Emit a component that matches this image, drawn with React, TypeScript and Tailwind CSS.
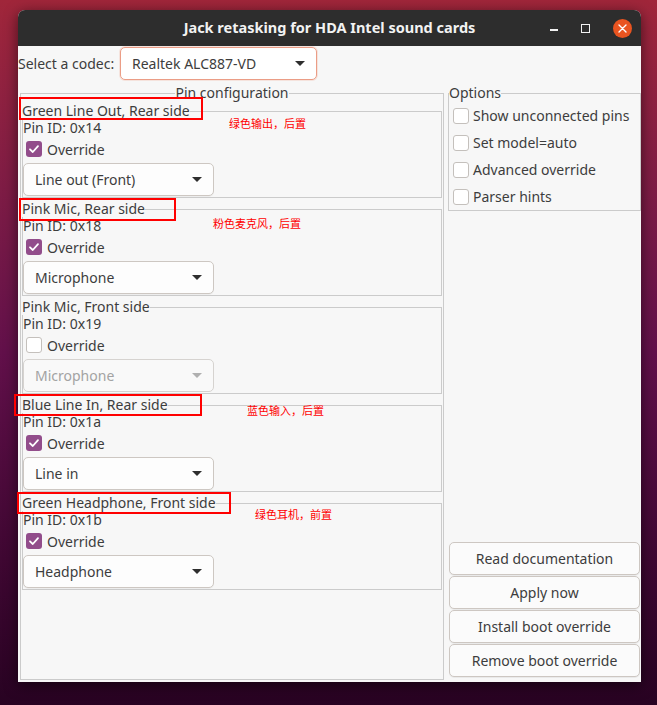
const pins = [
  { name: "Green Line Out, Rear side", id: "0x14", override: true, value: "Line out (Front)" },
  { name: "Pink Mic, Rear side", id: "0x18", override: true, value: "Microphone" },
  { name: "Pink Mic, Front side", id: "0x19", override: false, value: "Microphone" },
  { name: "Blue Line In, Rear side", id: "0x1a", override: true, value: "Line in" },
  { name: "Green Headphone, Front side", id: "0x1b", override: true, value: "Headphone" },
];

const options = ["Show unconnected pins", "Set model=auto", "Advanced override", "Parser hints"];

const buttons = ["Read documentation", "Apply now", "Install boot override", "Remove boot override"];

const Arrow = ({ disabled }: { disabled?: boolean }) => (
  <svg width="10" height="5" viewBox="0 0 10 5">
    <polygon points="0,0 10,0 5,5" fill={disabled ? "#b0b0b0" : "#2e2e2e"} />
  </svg>
);

const Check = ({ checked }: { checked: boolean }) =>
  checked ? (
    <span className="flex h-4 w-4 items-center justify-center rounded-[3px] bg-[#924d8b]">
      <svg width="16" height="16" viewBox="0 0 16 16">
        <path d="M4 8.3 L6.8 11 L12 5.2" fill="none" stroke="#ffffff" strokeWidth="1.8" strokeLinecap="round" strokeLinejoin="round" />
      </svg>
    </span>
  ) : (
    <span className="h-4 w-4 rounded-[3px] border border-[#c4c0bc] bg-white" />
  );

const Combo = ({ value, disabled }: { value: string; disabled?: boolean }) => (
  <div
    className={`flex h-[33px] w-[191px] items-center justify-between rounded-[5px] border pl-[11px] pr-[11px] ${
      disabled
        ? "border-[#d6d3d0] bg-[#f9f9f9] text-[#a3a3a3]"
        : "border-[#cdc7c2] bg-[#fdfdfd] text-[#3d3d3d] shadow-[0_1px_0_rgba(0,0,0,0.04)]"
    }`}
  >
    <span>{value}</span>
    <Arrow disabled={disabled} />
  </div>
);

const PinFrame = ({ pin }: { pin: (typeof pins)[number] }) => (
  <fieldset className="border border-[#cbcbcb] pb-[1px]">
    <legend className="-ml-[1px] h-4 leading-4">{pin.name}</legend>
    <div className="h-[17px] leading-[17px]">Pin ID: {pin.id}</div>
    <div className="ml-[3px] mt-[4px] flex h-[18px] items-center gap-[5px]">
      <Check checked={pin.override} />
      <span>Override</span>
    </div>
    <div className="mt-[5px]">
      <Combo value={pin.value} disabled={!pin.override} />
    </div>
  </fieldset>
);

const notes = [
  { box: "left-[19px] top-[97px] w-[184px] h-[23px]", text: "绿色输出，后置", pos: "left-[229px] top-[116px]" },
  { box: "left-[19px] top-[198px] w-[157px] h-[23px]", text: "粉色麦克风，后置", pos: "left-[213px] top-[216px]" },
  { box: "left-[14px] top-[394px] w-[188px] h-[22px]", text: "蓝色输入，后置", pos: "left-[247px] top-[403px]" },
  { box: "left-[17px] top-[492px] w-[214px] h-[22px]", text: "绿色耳机，前置", pos: "left-[255px] top-[507px]" },
];

export default function App() {
  return (
    <div className="relative h-[705px] w-[657px] overflow-hidden bg-linear-to-b from-[#a0263a] via-[#62104a] to-[#280322] pt-[10px] font-['Noto_Sans',sans-serif] text-[14px] text-[#3d3d3d]">
      <div className="ml-[18px] flex h-[672px] w-[623px] flex-col rounded-t-[7px] bg-[#f7f7f7] shadow-[0_3px_14px_rgba(0,0,0,0.55)]">
        {/* title bar */}
        <div className="relative flex h-[36px] items-center justify-center rounded-t-[7px] bg-[#2d2d2d]">
          <span className="text-[14.5px] font-bold text-[#f2f2f2]">Jack retasking for HDA Intel sound cards</span>
          <div className="absolute right-[9px] top-0 flex h-[36px] items-center gap-[23px]">
            <span className="mt-[4px] h-[1.5px] w-[8px] bg-[#f2f2f2]" />
            <span className="h-[9px] w-[9px] border-[1.5px] border-[#f2f2f2]" />
            <span className="flex h-[19px] w-[19px] items-center justify-center rounded-full bg-[#e95420]">
              <svg width="9" height="9" viewBox="0 0 9 9">
                <path d="M1 1 L8 8 M8 1 L1 8" stroke="#ffffff" strokeWidth="1.4" strokeLinecap="round" />
              </svg>
            </span>
          </div>
        </div>

        {/* codec row */}
        <div className="mt-[1px] flex items-center gap-[3px]">
          <span className="w-[99px]">Select a codec:</span>
          <div className="flex h-[33px] w-[197px] items-center justify-between rounded-[5px] border border-[#eb9d86] bg-white pl-[11px] pr-[11px] shadow-[0_0_0_1px_rgba(233,84,32,0.12)]">
            <span>Realtek ALC887-VD</span>
            <Arrow />
          </div>
        </div>

        {/* frames */}
        <div className="mt-[5px] flex flex-1 gap-1 pb-[2px] pl-[2px]">
          <fieldset className="flex h-[595px] w-[424px] flex-col border border-[#cbcbcb] px-[1px] pt-[2px]">
            <legend className="mx-auto h-4 leading-4">Pin configuration</legend>
            <div className="flex flex-col gap-[3px]">
              {pins.map((p) => (
                <PinFrame key={p.id} pin={p} />
              ))}
            </div>
          </fieldset>

          <div className="flex w-[193px] flex-col">
            <fieldset className="border border-[#cbcbcb] pt-[1px]">
              <legend className="h-4 leading-4">Options</legend>
              <div className="pl-1">
                {options.map((o) => (
                  <div key={o} className="flex h-[27px] items-center gap-1">
                    <Check checked={false} />
                    <span>{o}</span>
                  </div>
                ))}
              </div>
            </fieldset>
            <div className="flex-1" />
            <div className="mb-[3px] flex flex-col gap-[1px] px-[1px]">
              {buttons.map((b) => (
                <button
                  key={b}
                  className="h-[33px] rounded-[5px] border border-[#cdc7c2] bg-[#fbfbfb] text-center text-[#3d3d3d] shadow-[0_1px_0_rgba(0,0,0,0.05)]"
                >
                  {b}
                </button>
              ))}
            </div>
          </div>
        </div>
      </div>

      {/* red annotations */}
      {notes.map((n) => (
        <div key={n.text}>
          <div className={`absolute border-2 border-[#ff0000] ${n.box}`} />
          <div
            className={`absolute text-[11px] leading-[14px] text-[#ff0000] font-['Noto_Sans_CJK_SC',sans-serif] ${n.pos}`}
          >
            {n.text}
          </div>
        </div>
      ))}
    </div>
  );
}
